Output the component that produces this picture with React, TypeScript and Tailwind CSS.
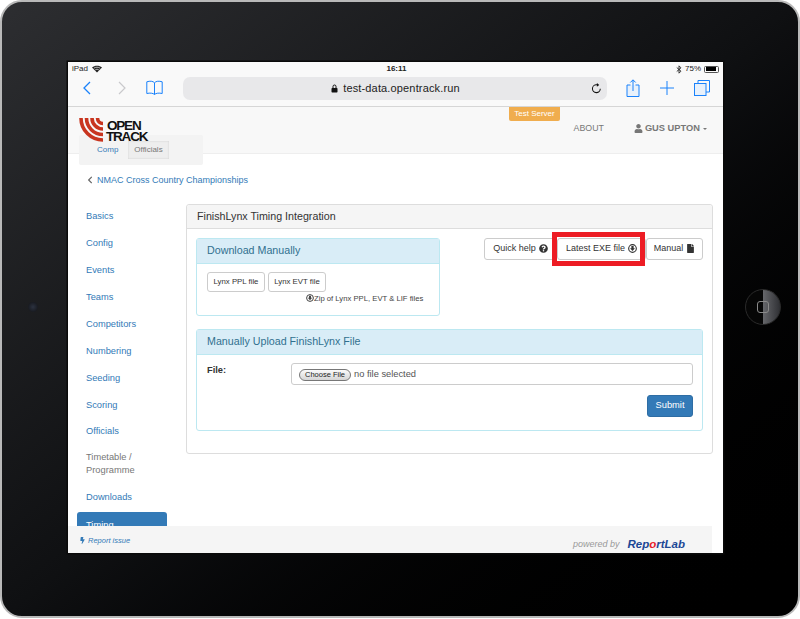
import { FaBolt, FaChevronLeft, FaFile, FaQuestionCircle, FaUser } from "react-icons/fa";

const menu = ["Basics", "Config", "Events", "Teams", "Competitors", "Numbering", "Seeding", "Scoring", "Officials"];

function DownloadCircle({ size = 9 }: { size?: number }) {
  return (
    <svg width={size} height={size} viewBox="0 0 16 16" className="shrink-0">
      <circle cx="8" cy="8" r="6.8" fill="none" stroke="currentColor" strokeWidth="2" />
      <path d="M6 3.5h4v4h2.4L8 12.4 3.6 7.5H6z" fill="currentColor" />
    </svg>
  );
}

function Logo() {
  return (
    <div className="relative z-10 flex items-start">
      <svg width="24" height="24" viewBox="0 0 24 24" className="shrink-0">
        <g fill="none" stroke="#c8351f" strokeWidth="3.6">
          <path d="M2 0A22 22 0 0 0 24 22" />
          <path d="M7.500 0A16.500 16.500 0 0 0 24 16.500" />
          <path d="M13 0A11 11 0 0 0 24 11" />
          <path d="M18.500 0A5.500 5.500 0 0 0 24 5.500" />
        </g>
      </svg>
      <div className="ml-[3px] mt-[2px] text-[13.500px] font-bold leading-[11.500px] tracking-[-1.200px] text-[#111]">
        <div className="pl-[1px]">OPEN</div>
        <div>TRACK</div>
      </div>
    </div>
  );
}

function StatusBar() {
  return (
    <div className="grid h-[15px] shrink-0 grid-cols-3 items-center bg-[#f9f9f9] pl-[4px] pr-[4px] text-[8px] text-[#222]">
      <div className="flex items-center gap-[4px]">
        <span>iPad</span>
        <svg width="10" height="8" viewBox="0 0 20 16">
          <path d="M10 15 0 5c5.500-5 14.500-5 20 0z" fill="#222" />
          <path d="M3.600 6.500c3.800-2.800 9-2.800 12.800 0" fill="none" stroke="#f9f9f9" strokeWidth="1.400" />
          <path d="M6.500 9.700c2.200-1.500 4.800-1.500 7 0" fill="none" stroke="#f9f9f9" strokeWidth="1.400" />
        </svg>
      </div>
      <div className="pl-[2px] text-center font-bold">16:11</div>
      <div className="flex items-center justify-end gap-[3px]">
        <svg width="6" height="9" viewBox="0 0 10 16">
          <path d="M1 4.500 8.500 11 5 14.500V1.500L8.500 5 1 11.500" fill="none" stroke="#222" strokeWidth="1.600" />
        </svg>
        <span>75%</span>
        <div className="flex h-[7px] w-[15px] items-stretch rounded-[1.500px] border border-[#555] p-[0.500px]">
          <div className="w-[10px] bg-black" />
        </div>
      </div>
    </div>
  );
}

function Toolbar() {
  return (
    <div className="flex h-[30px] shrink-0 items-start border-b border-[#d6d6d6] bg-[#f9f9f9] pl-[15px]">
      <svg width="8" height="14" viewBox="0 0 8 14" className="mt-[4px]">
        <path d="M7 1 1 7l6 6" fill="none" stroke="#1a82fb" strokeWidth="1.300" />
      </svg>
      <svg width="8" height="14" viewBox="0 0 8 14" className="ml-[27px] mt-[4px]">
        <path d="m1 1 6 6-6 6" fill="none" stroke="#c9c9cc" strokeWidth="1.200" />
      </svg>
      <svg width="17" height="16" viewBox="0 0 17 16" className="ml-[20px] mt-[3px]">
        <path
          d="M8.500 14.500C7 13 4 12.800.8 13.500V1.800C4 .8 7 1 8.500 2.800 10 1 13 .8 16.200 1.800v11.700C13 12.800 10 13 8.500 14.500zM8.500 2.800v11.700"
          fill="none"
          stroke="#1a82fb"
          strokeWidth="1"
        />
      </svg>
      <div className="relative ml-[20px] flex h-[23px] w-[424px] items-center justify-center rounded-[7px] bg-[#e8e8ea] pl-[1px]">
        <svg width="7" height="9" viewBox="0 0 14 18" className="mr-[5px]">
          <path d="M4 8V5a3 3 0 0 1 6 0v3" fill="none" stroke="#111" strokeWidth="2" />
          <rect x="1" y="8" width="12" height="9" rx="1.500" fill="#111" />
        </svg>
        <span className="text-[11px] tracking-[0.15px] text-[#222]">test-data.opentrack.run</span>
        <svg width="11" height="11" viewBox="0 0 16 16" className="absolute right-[5px] top-[6px]">
          <path d="M13.500 8.500A5.700 5.700 0 1 1 8 2.600h1.500" fill="none" stroke="#111" strokeWidth="1.500" />
          <path d="M8.500 0v5.500l3.500-2.700z" fill="#111" />
        </svg>
      </div>
      <svg width="14" height="18" viewBox="0 0 14 18" className="ml-[19px] mt-[2px]">
        <path d="M4.500 6H1v11.500h12V6H9.500M7 12V1M4.300 3.500 7 .8l2.700 2.700" fill="#cfe5fe" fillOpacity="0.4" stroke="#1a82fb" strokeWidth="1" />
      </svg>
      <svg width="14" height="14" viewBox="0 0 14 14" className="ml-[20px] mt-[4px]">
        <path d="M7 0v14M0 7h14" stroke="#1a82fb" strokeWidth="1" />
      </svg>
      <svg width="16" height="16" viewBox="0 0 16 16" className="ml-[20px] mt-[3px]">
        <path d="M4 3.500V.5h11.500V12H12" fill="none" stroke="#1a82fb" strokeWidth="1" />
        <rect x="0.500" y="3.500" width="11.500" height="12" fill="#cfe5fe" fillOpacity="0.4" stroke="#1a82fb" strokeWidth="1" />
      </svg>
    </div>
  );
}

function SiteNav() {
  return (
    <div className="relative flex h-[47px] shrink-0 items-start border-b border-[#eeeeee] bg-[#f8f8f8] pl-[11px] pt-[11px]">
      <Logo />
      <div className="absolute left-[11px] top-[28px] flex h-[30px] w-[124px] items-center rounded-[2px] bg-[#f3f3f3] pl-[7px] text-[8px]">
        <a className="w-[42px] pl-[11px] text-[#337ab7]">Comp</a>
        <a className="flex h-[18px] w-[41px] items-center justify-center bg-[#eeeeee] text-[#777] shadow-[inset_0_0_2px_rgba(0,0,0,0.15)]">Officials</a>
      </div>
      <div className="absolute left-[441px] top-0 flex h-[14px] w-[51px] items-center justify-center rounded-b-[2px] bg-[#f0ad4e] text-[8px] text-white">
        Test Server
      </div>
      <a className="ml-auto mt-[4px] text-[8.800px] text-[#777]">ABOUT</a>
      <a className="ml-[30px] mr-[16px] mt-[4px] flex items-center text-[9.300px] font-bold text-[#777]">
        <FaUser size={9} className="mr-[2px]" />
        GUS UPTON
        <span className="ml-[3px] mt-[1px] border-x-[2.500px] border-t-[2.500px] border-x-transparent border-t-[#777]" />
      </a>
    </div>
  );
}

function Sidebar() {
  return (
    <div className="ml-[9px] w-[90px] shrink-0 text-[9.300px] leading-[13px]">
      {menu.map((m) => (
        <a key={m} className={`block px-[9px] pt-[7px] text-[#337ab7] ${m === "Scoring" ? "h-[26px]" : "h-[27px]"}`}>
          {m}
        </a>
      ))}
      <div className="px-[9px] pb-[7px] pt-[6px] text-[#777]">
        Timetable /<br />
        Programme
      </div>
      <a className="block h-[27px] px-[9px] pt-[7px] text-[#337ab7]">Downloads</a>
      <a className="mt-[1px] block h-[27px] rounded-[3px] bg-[#337ab7] px-[9px] pt-[7px] text-white">Timing</a>
    </div>
  );
}

const btn = "flex h-[22px] items-center justify-center rounded-[3px] border border-[#ccc] bg-white text-[#333]";

function Panel() {
  return (
    <div className="ml-[19px] mt-[1px] h-[250px] w-[527px] rounded-[3px] border border-[#dddddd] bg-white">
      <div className="flex h-[24px] items-center rounded-t-[3px] border-b border-[#dddddd] bg-[#f5f5f5] pl-[10px] text-[10.700px] text-[#333]">
        FinishLynx Timing Integration
      </div>
      <div className="px-[9px] pt-[9px]">
        <div className="flex items-start justify-between">
          <div className="h-[78px] w-[244px] rounded-[3px] border border-[#bce8f1]">
            <div className="flex h-[25px] items-center border-b border-[#bce8f1] bg-[#d9edf7] pl-[10px] text-[10.700px] text-[#31708f]">
              Download Manually
            </div>
            <div className="flex gap-[3px] pl-[10px] pt-[8px]">
              <div className={`${btn} !h-[20px] w-[58px] text-[7.800px]`}>Lynx PPL file</div>
              <div className={`${btn} !h-[20px] w-[58px] text-[7.800px]`}>Lynx EVT file</div>
            </div>
            <div className="flex items-center pl-[109px] pt-[1px] text-[7.700px] text-[#444]">
              <DownloadCircle size={8} />
              Zip of Lynx PPL, EVT &amp; LIF files
            </div>
          </div>
          <div className="relative flex">
            <div className={`${btn} w-[73px] gap-[3px] text-[9px]`}>
              Quick help <FaQuestionCircle size={9} />
            </div>
            <div className={`${btn} w-[89px] gap-[3px] text-[9px]`}>
              Latest EXE file <DownloadCircle />
            </div>
            <div className={`${btn} w-[57px] gap-[3px] text-[9px]`}>
              Manual <FaFile size={9} />
            </div>
            <div className="absolute left-[68px] top-[-6px] h-[34px] w-[93px] border-[5px] border-[#ed1c24]" />
          </div>
        </div>
        <div className="mt-[13px] h-[102px] rounded-[3px] border border-[#bce8f1]">
          <div className="flex h-[25px] items-center border-b border-[#bce8f1] bg-[#d9edf7] pl-[10px] text-[10.700px] text-[#31708f]">
            Manually Upload FinishLynx File
          </div>
          <div className="pl-[10px] pr-[9px] pt-[8px]">
            <div className="flex items-start">
              <div className="w-[84px] pt-[1px] text-[9.300px] font-bold text-[#333]">File:</div>
              <div className="flex h-[22px] flex-1 items-center rounded-[3px] border border-[#ccc] pl-[7px] pt-[3px] text-[9.300px] text-[#555]">
                <span className="flex h-[12px] w-[52px] items-center justify-center rounded-[6px] border border-[#777] bg-gradient-to-b from-[#fbfbfb] to-[#d5d5d5] text-[7.500px] text-[#222]">
                  Choose File
                </span>
                <span className="ml-[3px]">no file selected</span>
              </div>
            </div>
            <div className="mt-[10px] flex justify-end">
              <div className="flex h-[22px] w-[46px] items-center justify-center rounded-[3px] border border-[#2e6da4] bg-[#337ab7] text-[9.300px] text-white">
                Submit
              </div>
            </div>
          </div>
        </div>
      </div>
    </div>
  );
}

export default function App() {
  return (
    <div className="h-[619px] w-[800px] overflow-hidden bg-white font-['Liberation_Sans',sans-serif]">
      <div className="flex h-[618px] w-[800px] items-center rounded-[22px] border-[2px] border-[#b9b9b9] bg-gradient-to-br from-[#2d2e31] via-[#0f1012] to-[#000000] pb-[4px]">
        <div className="flex w-[66px] shrink-0 justify-center pr-[4px]">
          <div className="h-[10px] w-[10px] rounded-full bg-[radial-gradient(circle,#2c3240,#101114)]" />
        </div>
        <div className="flex h-[491px] w-[655px] shrink-0 flex-col overflow-hidden bg-white shadow-[0_0_0_1.500px_#0a0a0a]">
          <StatusBar />
          <Toolbar />
          <SiteNav />
          <div className="min-h-0 flex-1 overflow-hidden">
            <div className="flex h-[49px] items-start pl-[18px] pt-[20px] text-[9px] text-[#337ab7]">
              <FaChevronLeft size={8} className="mr-[3px] mt-[2px] text-[#666]" />
              NMAC Cross Country Championships
            </div>
            <div className="flex items-start">
              <Sidebar />
              <Panel />
            </div>
          </div>
          <div className="mr-[11px] flex h-[27px] shrink-0 items-start bg-[#f5f5f5] pl-[11px]">
            <a className="mt-[9px] flex items-center text-[7.500px] italic text-[#337ab7]">
              <FaBolt size={7} className="mr-[2px]" />
              Report issue
            </a>
            <span className="ml-auto mt-[12px] text-[9px] italic text-[#999]">powered by</span>
            <span className="ml-[8px] mr-[27px] mt-[10px] text-[11.500px] font-bold italic text-[#1d4795]">
              Rep<span className="text-[#e8202a]">o</span>rtLab
            </span>
          </div>
        </div>
        <div className="flex flex-1 justify-center pl-[5px]">
          <div className="flex h-[36px] w-[36px] items-center justify-center rounded-full border border-[#2a2a2a] bg-[linear-gradient(90deg,#060606_50%,#66676b_50%,#2f3034)]">
            <div className="h-[12px] w-[12px] rounded-[3px] border border-[#8a8a8a]" />
          </div>
        </div>
      </div>
    </div>
  );
}
